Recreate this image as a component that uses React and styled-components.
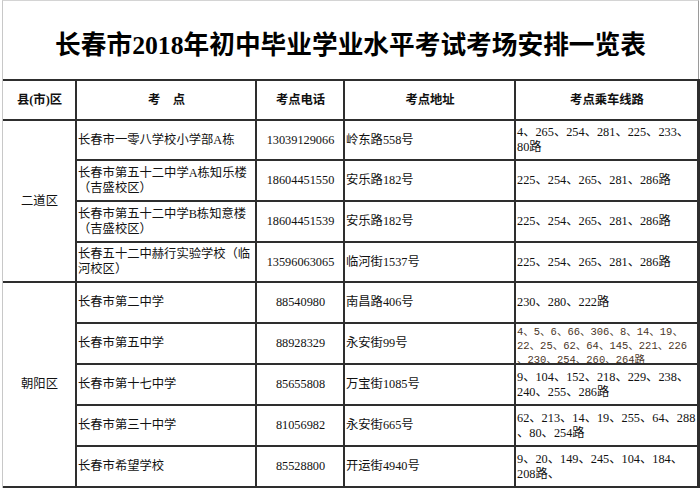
import React from "react";
import styled, { createGlobalStyle } from "styled-components";

const GlobalStyle = createGlobalStyle`
  html, body {
    margin: 0;
    padding: 0;
    background: #ffffff;
  }
  body {
    font-family: "Liberation Serif", "Noto Sans CJK SC", sans-serif;
    color: #111;
  }
`;

const groups = [
  {
    district: "二道区",
    rows: [
      { name: ["长春市一零八学校小学部A栋"], phone: "13039129066", addr: "岭东路558号", route: ["4、265、254、281、225、233、", "80路"], h: 38 },
      { name: ["长春市第五十二中学A栋知乐楼", "（吉盛校区）"], phone: "18604451550", addr: "安乐路182号", route: ["225、254、265、281、286路"], h: 39 },
      { name: ["长春市第五十二中学B栋知意楼", "（吉盛校区）"], phone: "18604451539", addr: "安乐路182号", route: ["225、254、265、281、286路"], h: 39 },
      { name: ["长春五十二中赫行实验学校（临", "河校区）"], phone: "13596063065", addr: "临河街1537号", route: ["225、254、265、281、286路"], h: 38 },
    ],
  },
  {
    district: "朝阳区",
    rows: [
      { name: ["长春市第二中学"], phone: "88540980", addr: "南昌路406号", route: ["230、280、222路"], h: 39 },
      { name: ["长春市第五中学"], phone: "88928329", addr: "永安街99号", route: ["4、5、6、66、306、8、14、19、", "22、25、62、64、145、221、226", "、230、254、260、264路"], h: 39, pasted: true },
      { name: ["长春市第十七中学"], phone: "85655808", addr: "万宝街1085号", route: ["9、104、152、218、229、238、", "240、255、286路"], h: 39 },
      { name: ["长春市第三十中学"], phone: "81056982", addr: "永安街665号", route: ["62、213、14、19、255、64、288", "、80、254路"], h: 39 },
      { name: ["长春市希望学校"], phone: "85528800", addr: "开运街4940号", route: ["9、20、149、245、104、184、", "208路、"], h: 39 },
    ],
  },
];

const Sheet = styled.div`
  width: 700px;
`;

const TitleBox = styled.div`
  box-sizing: border-box;
  margin-left: 2px;
  width: 697px;
  height: 79px;
  border-top: 1px solid #d4d4d4;
  border-left: 1px solid #c8c8c8;
  border-right: 1px solid #9a9a9a;
  display: flex;
  align-items: center;
  justify-content: center;
  padding-top: 5px;
`;

const Title = styled.h1`
  margin: 0;
  font-size: 25.7px;
  font-weight: bold;
  color: #000;
  letter-spacing: 0;
  white-space: nowrap;
`;

const Grid = styled.div`
  margin-left: 2px;
  width: 696px;
  border-left: 1px solid #c8c8c8;
  background: #2e2e2e;
  padding: 2px 2px 2px 0;
  display: grid;
  grid-template-columns: 72px 178px 86px 169px 181px;
  grid-template-rows: ${(p) => p.$rows};
  gap: 2px;
`;

const Cell = styled.div`
  background: #fff;
  display: flex;
  flex-direction: column;
  justify-content: ${(p) => (p.$top ? "flex-start" : "center")};
  align-items: ${(p) => (p.$center ? "center" : "flex-start")};
  padding: ${(p) => (p.$top ? "1px 0 0 1px" : "0 0 0 1px")};
  overflow: hidden;
  font-size: 12.3px;
  line-height: 15px;
  font-weight: ${(p) => (p.$bold ? "bold" : "normal")};
  grid-row: ${(p) => (p.$span ? `span ${p.$span}` : "auto")};
`;

const Line = styled.span`
  display: block;
  white-space: nowrap;
`;

const PastedLine = styled.span`
  display: block;
  white-space: nowrap;
  font-family: "Liberation Mono", "Noto Sans CJK SC", monospace;
  font-size: 10.5px;
  line-height: 14px;
  color: #4a3526;
`;

function Lines({ items }) {
  return items.map((t, i) => <Line key={i}>{t}</Line>);
}

export default function App() {
  const rowHeights = ["38px"];
  groups.forEach((g) => g.rows.forEach((r) => rowHeights.push(`${r.h}px`)));

  return (
    <Sheet>
      <GlobalStyle />
      <TitleBox>
        <Title>长春市2018年初中毕业学业水平考试考场安排一览表</Title>
      </TitleBox>
      <Grid $rows={rowHeights.join(" ")}>
        <Cell $center $bold>县(市)区</Cell>
        <Cell $center $bold>考　点</Cell>
        <Cell $center $bold>考点电话</Cell>
        <Cell $center $bold>考点地址</Cell>
        <Cell $center $bold>考点乘车线路</Cell>
        {groups.map((g) => (
          <React.Fragment key={g.district}>
            <Cell $center $span={g.rows.length}>{g.district}</Cell>
            {g.rows.map((r, i) => (
              <React.Fragment key={i}>
                <Cell><Lines items={r.name} /></Cell>
                <Cell $center>{r.phone}</Cell>
                <Cell>{r.addr}</Cell>
                {r.pasted ? (
                  <Cell $top>
                    {r.route.map((t, j) => <PastedLine key={j}>{t}</PastedLine>)}
                  </Cell>
                ) : (
                  <Cell><Lines items={r.route} /></Cell>
                )}
              </React.Fragment>
            ))}
          </React.Fragment>
        ))}
      </Grid>
    </Sheet>
  );
}
